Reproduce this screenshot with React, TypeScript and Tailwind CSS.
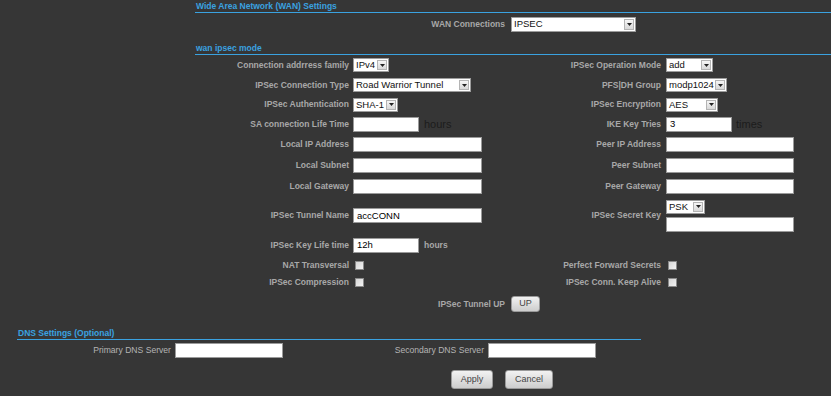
import React from "react"

function Arrow() {
  return (
    <span className="w-[10px] my-px mr-px border border-[#b4b4b4] bg-gradient-to-b from-[#f6f6f6] to-[#d8d8d8] flex items-center justify-center">
      <svg width="5" height="3" viewBox="0 0 5 3">
        <path d="M0 0H5L2.5 3Z" fill="#222" />
      </svg>
    </span>
  )
}

function Sel({ className, value }: { className: string; value: string }) {
  return (
    <div className={`${className} flex items-stretch border border-[#9c9c9c] bg-white`}>
      <span className="flex-1 pl-[2px] flex items-center text-[9.5px] leading-none text-[#111] whitespace-nowrap">{value}</span>
      <Arrow />
    </div>
  )
}

function Input({ className, value = "" }: { className: string; value?: string }) {
  return (
    <div className={`${className} border border-[#9a9a9a] bg-white flex items-center pl-[3px] text-[9.5px] leading-none text-black`}>
      {value}
    </div>
  )
}

function Check() {
  return <span className="ml-[2px] w-[9px] h-[9px] border border-[#8a8a8a] bg-gradient-to-br from-[#d6d6d6] to-[#f2f2f2]" />
}

function Label({ children }: { children: React.ReactNode }) {
  return <div className="pr-[4px] text-right text-[8.5px] font-bold text-[#a8a8a8] leading-none whitespace-nowrap">{children}</div>
}

function Heading({ children, className }: { children: React.ReactNode; className: string }) {
  return (
    <div className={`${className} border-b border-[#3aa2e0] pl-px text-[8.5px] font-bold leading-[11px] text-[#3aa2e0]`}>
      {children}
    </div>
  )
}

function Row({ h, left, leftVal, right, rightVal }: { h: string; left: string; leftVal: React.ReactNode; right: string; rightVal: React.ReactNode }) {
  return (
    <div className={`${h} grid grid-cols-[158px_155px_158px_1fr] items-center`}>
      <Label>{left}</Label>
      <div className="flex items-center">{leftVal}</div>
      <div className="pr-px">
        <Label>{right}</Label>
      </div>
      <div className="flex items-center">{rightVal}</div>
    </div>
  )
}

function Btn({ className, children }: { className: string; children: React.ReactNode }) {
  return (
    <div className={`${className} flex items-center justify-center rounded-[3px] border border-[#9a9a9a] bg-gradient-to-b from-[#f2f2f2] to-[#cdcdcd] text-[9px] text-[#444]`}>
      {children}
    </div>
  )
}

export default function App() {
  return (
    <div className="w-[831px] h-[396px] overflow-hidden bg-[#363636] font-['Liberation_Sans',Arial,sans-serif]">
      <div className="ml-[195px]">
        <Heading className="pt-px">Wide Area Network (WAN) Settings</Heading>
        <div className="h-[22px] flex items-center">
          <div className="w-[316px] pr-[6px] text-right text-[8.5px] font-bold text-[#a8a8a8] leading-none">WAN Connections</div>
          <Sel className="w-[125px] h-[15px]" value="IPSEC" />
        </div>
        <Heading className="pt-[8px]">wan ipsec mode</Heading>

        <Row
          h="h-[20px]"
          left="Connection addrress family"
          leftVal={<Sel className="w-[36px] h-[14px]" value="IPv4" />}
          right="IPSec Operation Mode"
          rightVal={<Sel className="w-[47px] h-[14px]" value="add" />}
        />
        <Row
          h="h-[20px]"
          left="IPSec Connection Type"
          leftVal={<Sel className="w-[118px] h-[14px]" value="Road Warrior Tunnel" />}
          right="PFS|DH Group"
          rightVal={<Sel className="w-[61px] h-[14px]" value="modp1024" />}
        />
        <Row
          h="h-[19px]"
          left="IPSec Authentication"
          leftVal={<Sel className="w-[45px] h-[14px]" value="SHA-1" />}
          right="IPSec Encryption"
          rightVal={<Sel className="w-[52px] h-[14px]" value="AES" />}
        />
        <Row
          h="h-[20px]"
          left="SA connection Life Time"
          leftVal={
            <>
              <Input className="w-[66px] h-[15px]" />
              <span className="ml-[5px] text-[11px] text-[#1c1c1c] leading-none">hours</span>
            </>
          }
          right="IKE Key Tries"
          rightVal={
            <>
              <Input className="w-[66px] h-[15px]" value="3" />
              <span className="ml-[4px] text-[11px] text-[#1c1c1c] leading-none">times</span>
            </>
          }
        />
        <Row
          h="h-[21px]"
          left="Local IP Address"
          leftVal={<Input className="w-[129px] h-[15px]" />}
          right="Peer IP Address"
          rightVal={<Input className="w-[128px] h-[15px]" />}
        />
        <Row
          h="h-[21px]"
          left="Local Subnet"
          leftVal={<Input className="w-[129px] h-[15px]" />}
          right="Peer Subnet"
          rightVal={<Input className="w-[128px] h-[15px]" />}
        />
        <Row
          h="h-[21px]"
          left="Local Gateway"
          leftVal={<Input className="w-[129px] h-[15px]" />}
          right="Peer Gateway"
          rightVal={<Input className="w-[128px] h-[15px]" />}
        />
        <Row
          h="h-[37px]"
          left="IPSec Tunnel Name"
          leftVal={<Input className="w-[129px] h-[15px]" value="accCONN" />}
          right="IPSec Secret Key"
          rightVal={
            <div className="flex flex-col gap-[3px]">
              <Sel className="w-[39px] h-[14px]" value="PSK" />
              <Input className="w-[128px] h-[15px]" />
            </div>
          }
        />
        <Row
          h="h-[22px]"
          left="IPSec Key Life time"
          leftVal={
            <>
              <Input className="w-[66px] h-[15px]" value="12h" />
              <span className="ml-[5px] text-[8.5px] font-bold text-[#a8a8a8] leading-none">hours</span>
            </>
          }
          right=""
          rightVal={null}
        />
        <Row h="h-[18px]" left="NAT Transversal" leftVal={<Check />} right="Perfect Forward Secrets" rightVal={<Check />} />
        <Row h="h-[16px]" left="IPSec Compression" leftVal={<Check />} right="IPSec Conn. Keep Alive" rightVal={<Check />} />

        <div className="h-[28px] flex items-center">
          <div className="w-[316px] pr-[6px] text-right text-[8.5px] font-bold text-[#a8a8a8] leading-none">IPSec Tunnel UP</div>
          <Btn className="w-[29px] h-[16px]">UP</Btn>
        </div>
      </div>

      <div className="ml-[17px] w-[624px]">
        <Heading className="pt-[10px]">DNS Settings (Optional)</Heading>
        <div className="h-[21px] flex items-center">
          <div className="w-[158px] pr-[4px] text-right text-[8.6px] text-[#b4b4b4] leading-none">Primary DNS Server</div>
          <Input className="w-[108px] h-[15px]" />
          <div className="w-[205px] pr-[4px] text-right text-[8.6px] text-[#b4b4b4] leading-none">Secondary DNS Server</div>
          <Input className="w-[108px] h-[15px]" />
        </div>
      </div>

      <div className="mt-[9px] pl-[451px] flex gap-[12px]">
        <Btn className="w-[42px] h-[19px]">Apply</Btn>
        <Btn className="w-[48px] h-[19px]">Cancel</Btn>
      </div>
    </div>
  )
}
